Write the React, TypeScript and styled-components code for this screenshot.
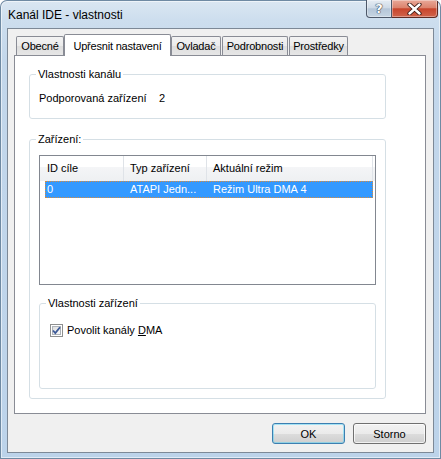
import React from 'react'
import styled, { createGlobalStyle } from 'styled-components'

const GlobalStyle = createGlobalStyle`
  html, body {
    margin: 0;
    padding: 0;
    background: #fff;
  }
  body {
    font-family: "Liberation Sans", Arial, sans-serif;
    font-size: 11px;
    color: #000;
  }
`

const Window = styled.div`
  width: 441px;
  height: 459px;
  box-sizing: border-box;
  display: flex;
  flex-direction: column;
  border-radius: 7px 7px 0 0;
  overflow: hidden;
  background: linear-gradient(180deg, #dbe7f2 0px, #cddeee 20px, #c3d7eb 60px, #bcd3ea 100%);
  box-shadow: inset 0 0 0 1px #6f8aa3, inset 0 0 0 2px rgba(255, 255, 255, 0.55);
`

const TitleBar = styled.div`
  height: 28px;
  flex: none;
  display: flex;
  align-items: flex-start;
  padding: 0 3px 0 8px;
`

const Title = styled.div`
  padding-top: 8px;
  font-size: 12px;
  line-height: 15px;
  color: #000;
`

const Captions = styled.div`
  margin-left: auto;
  display: flex;
`

const CaptionButton = styled.div<{ $close?: boolean }>`
  width: ${(p) => (p.$close ? 46 : 26)}px;
  height: 18px;
  box-sizing: border-box;
  display: flex;
  align-items: center;
  justify-content: center;
  border: 1px solid ${(p) => (p.$close ? '#5e2a22' : '#4d5869')};
  border-top: none;
  border-left: ${(p) => (p.$close ? 'none' : '1px solid #4d5869')};
  border-radius: ${(p) => (p.$close ? '0 0 4px 0' : '0 0 0 4px')};
  background: ${(p) =>
    p.$close
      ? 'linear-gradient(180deg, #e9a999 0%, #dc836d 45%, #c8452c 52%, #d0644b 100%)'
      : 'linear-gradient(180deg, #e6edf4 0%, #cfdbe7 45%, #b5c6d8 52%, #c6d5e3 100%)'};
  box-shadow: inset 0 0 0 1px rgba(255, 255, 255, 0.35);
  color: #fff;
  font-family: "DejaVu Sans", sans-serif;
  font-weight: bold;
  font-size: 13px;
  text-shadow: 0 0 1px #2c3848, 0 0 1px #2c3848, 0 0 1px #2c3848;
`

const Client = styled.div`
  flex: 1;
  margin: 0 7px 6px;
  border: 1px solid #7d8997;
  background: #f0f0f0;
  display: flex;
  flex-direction: column;
  padding: 5px 7px 8px 6px;
`

const TabStrip = styled.div`
  display: flex;
  align-items: flex-end;
  height: 22px;
  padding-left: 2px;
  margin-bottom: -1px;
  position: relative;
  z-index: 1;
`

const Tab = styled.div<{ $w: number; $active?: boolean; $gap?: number }>`
  width: ${(p) => p.$w}px;
  height: ${(p) => (p.$active ? 22 : 19)}px;
  margin-bottom: ${(p) => (p.$active ? 0 : 1)}px;
  margin-left: ${(p) => p.$gap || 0}px;
  box-sizing: border-box;
  border: 1px solid #898c95;
  border-bottom: none;
  border-radius: 2px 2px 0 0;
  display: flex;
  align-items: center;
  justify-content: center;
  white-space: nowrap;
  letter-spacing: -0.2px;
  background: ${(p) => (p.$active ? '#fff' : 'linear-gradient(180deg, #f3f3f3 0%, #ebebeb 50%, #dedede 51%, #e6e6e6 100%)')};
`

const Panel = styled.div`
  height: 359px;
  box-sizing: border-box;
  border: 1px solid #898c95;
  background: #fff;
  padding: 12px 0 0 14px;
  display: flex;
  flex-direction: column;
`

const Group = styled.fieldset<{ $w: number; $top?: number }>`
  width: ${(p) => p.$w}px;
  box-sizing: border-box;
  margin: ${(p) => p.$top || 0}px 0 0 0;
  padding: 0;
  min-width: 0;
  border: 1px solid #d5dfe5;
  border-radius: 3px;
`

const Legend = styled.legend`
  margin-left: 6px;
  padding: 0 2px;
  line-height: 13px;
  font-size: 11px;
`

const GroupBody = styled.div<{ $pad: string }>`
  padding: ${(p) => p.$pad};
`

const InfoRow = styled.div`
  display: flex;
  line-height: 13px;
`

const InfoLabel = styled.span`
  width: 120px;
`

const ListView = styled.div`
  height: 130px;
  box-sizing: border-box;
  border: 1px solid #828790;
  background: #fff;
`

const Header = styled.div`
  display: flex;
  height: 25px;
  background: linear-gradient(180deg, #ffffff 0%, #ffffff 42%, #f4f5f7 43%, #eef0f2 100%);
`

const HeaderCell = styled.div<{ $w: number; $pad: number }>`
  width: ${(p) => p.$w}px;
  box-sizing: border-box;
  padding-left: ${(p) => p.$pad}px;
  line-height: 25px;
  border-right: 1px solid #dfe3e8;
  white-space: nowrap;
`

const Row = styled.div`
  display: flex;
  width: 328px;
  height: 17px;
  margin-left: 5px;
  box-sizing: border-box;
  background: #3399ff;
  color: #fff;
  outline: 1px dotted #d98a3a;
  outline-offset: -1px;
`

const Cell = styled.div<{ $w: number; $pad: number }>`
  width: ${(p) => p.$w}px;
  box-sizing: border-box;
  padding-left: ${(p) => p.$pad}px;
  line-height: 17px;
  white-space: nowrap;
`

const CheckRow = styled.label`
  display: flex;
  align-items: center;
  height: 13px;
  line-height: 13px;
  gap: 4px;
`

const ButtonBar = styled.div`
  display: flex;
  justify-content: flex-end;
  gap: 8px;
  margin-top: 9px;
`

const Button = styled.button<{ $default?: boolean }>`
  width: 73px;
  height: 21px;
  padding: 0;
  box-sizing: border-box;
  font-family: "Liberation Sans", Arial, sans-serif;
  font-size: 11px;
  color: #000;
  border: 1px solid ${(p) => (p.$default ? '#3c7fb1' : '#707070')};
  border-radius: 3px;
  background: linear-gradient(180deg, #f2f2f2 0%, #ebebeb 50%, #dddddd 51%, #cfcfcf 100%);
  box-shadow: inset 0 0 0 1px ${(p) => (p.$default ? 'rgba(72, 208, 248, 0.45)' : 'rgba(255, 255, 255, 0.7)')};
`

const CloseIcon = () => (
  <svg width="15" height="12" viewBox="0 0 15 12">
    <path d="M2.5 1.5 L12.5 10.5 M12.5 1.5 L2.5 10.5" stroke="#3a1a14" strokeWidth="4.2" strokeLinecap="round" />
    <path d="M2.5 1.5 L12.5 10.5 M12.5 1.5 L2.5 10.5" stroke="#fff" strokeWidth="2.4" strokeLinecap="round" />
  </svg>
)

const CheckBox = () => (
  <svg width="13" height="13" viewBox="0 0 13 13">
    <defs>
      <linearGradient id="cb" x1="0" y1="0" x2="1" y2="1">
        <stop offset="0" stopColor="#dcdcdc" />
        <stop offset="1" stopColor="#fbfbfb" />
      </linearGradient>
    </defs>
    <rect x="0.5" y="0.5" width="12" height="12" fill="#fff" stroke="#8e8f8f" />
    <rect x="2.5" y="2.5" width="8" height="8" fill="url(#cb)" stroke="#aeb3b9" />
    <path d="M3 6.5 L5.3 9 L10 3.2" fill="none" stroke="#3c5a98" strokeWidth="1.8" />
  </svg>
)

const tabs = [
  { label: 'Obecné', w: 48 },
  { label: 'Upřesnit nastavení', w: 107, active: true },
  { label: 'Ovladač', w: 50 },
  { label: 'Podrobnosti', w: 66, gap: 1 },
  { label: 'Prostředky', w: 59, gap: 1 },
]

export default function App() {
  return (
    <>
      <GlobalStyle />
      <Window>
        <TitleBar>
          <Title>Kanál IDE - vlastnosti</Title>
          <Captions>
            <CaptionButton>?</CaptionButton>
            <CaptionButton $close>
              <CloseIcon />
            </CaptionButton>
          </Captions>
        </TitleBar>
        <Client>
          <TabStrip>
            {tabs.map((t) => (
              <Tab key={t.label} $w={t.w} $active={t.active} $gap={t.gap}>
                {t.label}
              </Tab>
            ))}
          </TabStrip>
          <Panel>
            <Group $w={357}>
              <Legend>Vlastnosti kanálu</Legend>
              <GroupBody $pad="11px 9px 13px">
                <InfoRow>
                  <InfoLabel>Podporovaná zařízení</InfoLabel>
                  <span>2</span>
                </InfoRow>
              </GroupBody>
            </Group>
            <Group $w={357} $top={14}>
              <Legend>Zařízení:</Legend>
              <GroupBody $pad="9px 9px 9px">
                <ListView>
                  <Header>
                    <HeaderCell $w={84} $pad={7}>ID cíle</HeaderCell>
                    <HeaderCell $w={83} $pad={6}>Typ zařízení</HeaderCell>
                    <HeaderCell $w={166} $pad={6}>Aktuální režim</HeaderCell>
                  </Header>
                  <Row>
                    <Cell $w={79} $pad={2}>0</Cell>
                    <Cell $w={83} $pad={6}>ATAPI Jedn...</Cell>
                    <Cell $w={166} $pad={6}>Režim Ultra DMA 4</Cell>
                  </Row>
                </ListView>
                <Group $w={337} $top={12}>
                  <Legend>Vlastnosti zařízení</Legend>
                  <GroupBody $pad="14px 10px 51px">
                    <CheckRow>
                      <CheckBox />
                      <span>
                        Povolit kanály <u>D</u>MA
                      </span>
                    </CheckRow>
                  </GroupBody>
                </Group>
              </GroupBody>
            </Group>
          </Panel>
          <ButtonBar>
            <Button $default>OK</Button>
            <Button>Storno</Button>
          </ButtonBar>
        </Client>
      </Window>
    </>
  )
}
